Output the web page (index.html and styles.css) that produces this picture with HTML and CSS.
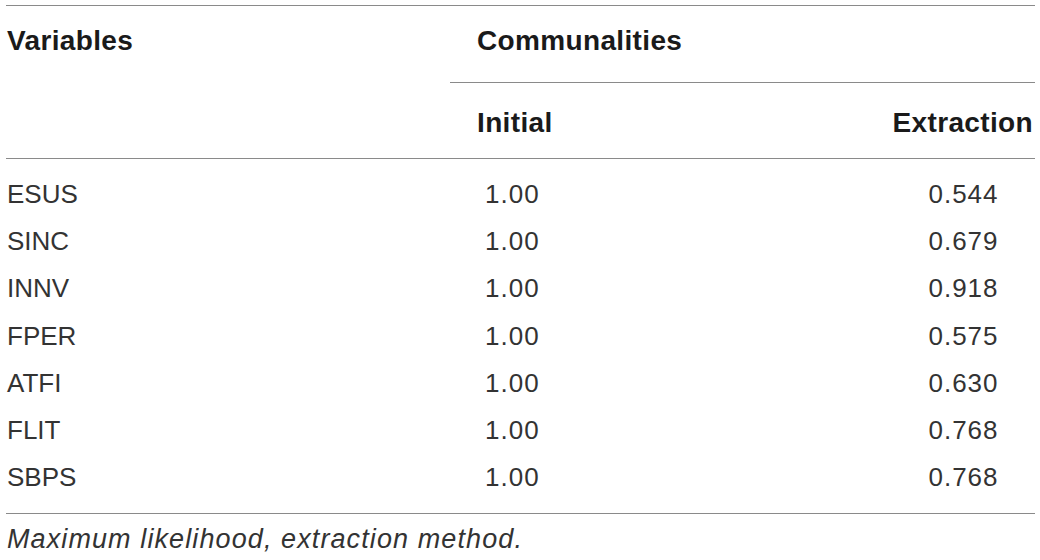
FILE: index.html
```html
<!DOCTYPE html>
<html lang="en">
<head>
<meta charset="utf-8">
<title>Communalities</title>
<link rel="stylesheet" href="styles.css">
</head>
<body>
<div class="table">
  <div class="head">
    <div class="h1">
      <div class="th">Variables</div>
      <div class="th pl">Communalities</div>
    </div>
    <div class="h2">
      <div class="th"></div>
      <div class="th pl ruled">Initial</div>
      <div class="th right ruled">Extraction</div>
    </div>
  </div>
  <div class="body">
    <div class="row"><div class="td">ESUS</div><div class="td num init">1.00</div><div class="td num ext">0.544</div></div>
    <div class="row"><div class="td">SINC</div><div class="td num init">1.00</div><div class="td num ext">0.679</div></div>
    <div class="row"><div class="td">INNV</div><div class="td num init">1.00</div><div class="td num ext">0.918</div></div>
    <div class="row"><div class="td">FPER</div><div class="td num init">1.00</div><div class="td num ext">0.575</div></div>
    <div class="row"><div class="td">ATFI</div><div class="td num init">1.00</div><div class="td num ext">0.630</div></div>
    <div class="row"><div class="td">FLIT</div><div class="td num init">1.00</div><div class="td num ext">0.768</div></div>
    <div class="row"><div class="td">SBPS</div><div class="td num init">1.00</div><div class="td num ext">0.768</div></div>
  </div>
  <p class="note">Maximum likelihood, extraction method.</p>
</div>
</body>
</html>
```
FILE: styles.css
```css
html, body {
  margin: 0;
  padding: 0;
  background: #ffffff;
}

body {
  font-family: "Liberation Sans", Arial, sans-serif;
  color: #222222;
}

.table {
  width: 1029px;
  margin: 5px 0 0 6px;
  border-top: 1px solid #8a8a8a;
}

.head {
  border-bottom: 1px solid #8a8a8a;
}

.h1 {
  display: grid;
  grid-template-columns: 444px 585px;
  align-items: center;
  height: 76px;
  padding-bottom: 7px;
  box-sizing: border-box;
}

.h2 {
  display: grid;
  grid-template-columns: 444px 441px 144px;
  height: 76px;
}

.th {
  font-size: 28px;
  font-weight: bold;
  letter-spacing: 0.35px;
  color: #1a1a1a;
  padding-left: 1px;
  display: flex;
  align-items: center;
}

.pl {
  padding-left: 27px;
}

.ruled {
  border-top: 1px solid #8a8a8a;
  padding-top: 4px;
}

.right {
  justify-content: flex-end;
  padding-right: 2px;
}

.body {
  padding: 11.5px 0;
  border-bottom: 1px solid #8a8a8a;
}

.row {
  display: grid;
  grid-template-columns: 444px 441px 144px;
  height: 47.3px;
  align-items: center;
}

.td {
  font-size: 26px;
  padding-left: 1px;
  color: #333333;
}

.num {
  letter-spacing: 1px;
}

.init {
  padding-left: 35px;
}

.ext {
  text-align: center;
  padding-left: 1px;
}

.note {
  margin: 10px 0 0 0;
  padding-left: 1px;
  font-size: 27px;
  line-height: 30px;
  font-style: italic;
  letter-spacing: 1.1px;
  color: #333333;
}
```
